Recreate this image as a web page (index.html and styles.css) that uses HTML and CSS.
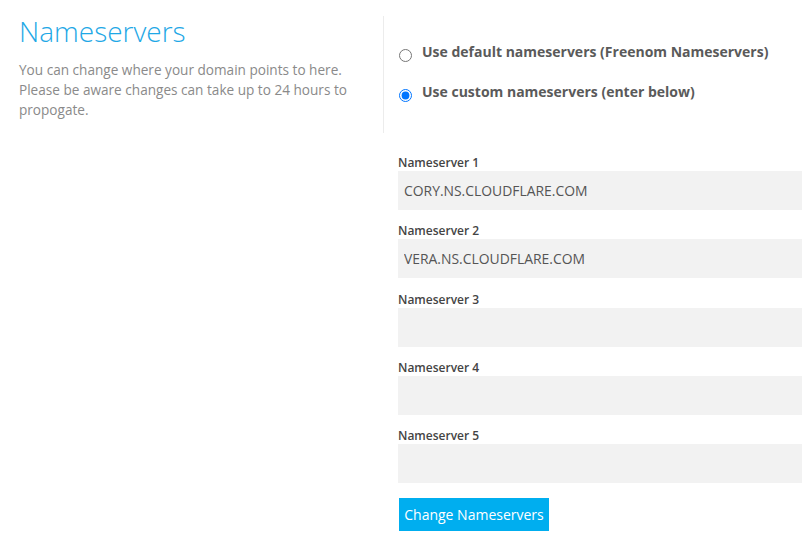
FILE: index.html
```html
<!DOCTYPE html>
<html>
<head>
<meta charset="utf-8">
<link rel="stylesheet" href="styles.css">
</head>
<body>
<div class="page">
  <div class="top">
    <div class="intro">
      <h1 class="title">Nameservers</h1>
      <p class="desc">You can change where your domain points to here. Please be aware changes can take up to 24 hours to propogate.</p>
    </div>
    <div class="choices">
      <label class="option"><input class="radio" type="radio" name="ns"><span>Use default nameservers (Freenom Nameservers)</span></label>
      <label class="option"><input class="radio" type="radio" name="ns" checked><span>Use custom nameservers (enter below)</span></label>
    </div>
  </div>
  <form class="form">
    <div class="group"><div class="label">Nameserver 1</div><input class="field" type="text" value="CORY.NS.CLOUDFLARE.COM"></div>
    <div class="group"><div class="label">Nameserver 2</div><input class="field" type="text" value="VERA.NS.CLOUDFLARE.COM"></div>
    <div class="group"><div class="label">Nameserver 3</div><input class="field" type="text" value=""></div>
    <div class="group"><div class="label">Nameserver 4</div><input class="field" type="text" value=""></div>
    <div class="group"><div class="label">Nameserver 5</div><input class="field" type="text" value=""></div>
    <button class="btn" type="button">Change Nameservers</button>
  </form>
</div>
</body>
</html>
```
FILE: styles.css
```css
html, body {
  margin: 0;
  padding: 0;
  background: #fff;
}
body {
  font-family: "Open Sans", "Liberation Sans", sans-serif;
  width: 802px;
  height: 553px;
  overflow: hidden;
}
.page {
  display: flex;
  flex-direction: column;
}
.top {
  display: flex;
  align-items: flex-start;
}
.intro {
  width: 364px;
  padding: 14px 0 0 19px;
  box-sizing: content-box;
}
.title {
  margin: 0 0 12px;
  font-size: 28px;
  line-height: 34px;
  font-weight: 300;
  color: #1fa8e6;
}
.desc {
  margin: 0;
  width: 345px;
  font-size: 13.6px;
  line-height: 20px;
  color: #8a8a8a;
}
.choices {
  margin-top: 16px;
  height: 117px;
  box-sizing: border-box;
  border-left: 1px solid #ececec;
  padding: 26px 0 0 15px;
  display: flex;
  flex-direction: column;
  gap: 19.5px;
}
.option {
  display: flex;
  align-items: flex-start;
  gap: 10px;
  font-size: 14px;
  line-height: 20px;
  font-weight: 700;
  color: #5a5a5a;
}
.radio {
  margin: 7px 0 0 0;
  width: 13px;
  height: 13px;
  flex: none;
}
.form {
  margin: 21px 0 0 398px;
  display: flex;
  flex-direction: column;
  align-items: flex-start;
}
.group {
  display: flex;
  flex-direction: column;
  margin-bottom: 12.25px;
}
.label {
  font-size: 12px;
  line-height: 17px;
  font-weight: 600;
  color: #444;
}
.field {
  width: 410px;
  height: 39px;
  box-sizing: border-box;
  border: none;
  outline: none;
  margin: 0;
  padding: 0 6px;
  background: #f2f2f2;
  font-family: "Open Sans", "Liberation Sans", sans-serif;
  font-size: 13.9px;
  color: #555;
}
.btn {
  margin: 2.75px 0 0 1px;
  width: 150px;
  height: 33px;
  padding: 0;
  border: none;
  background: #00aeef;
  color: #fff;
  font-family: "Open Sans", "Liberation Sans", sans-serif;
  font-size: 14px;
  line-height: 33px;
  cursor: pointer;
}
```
